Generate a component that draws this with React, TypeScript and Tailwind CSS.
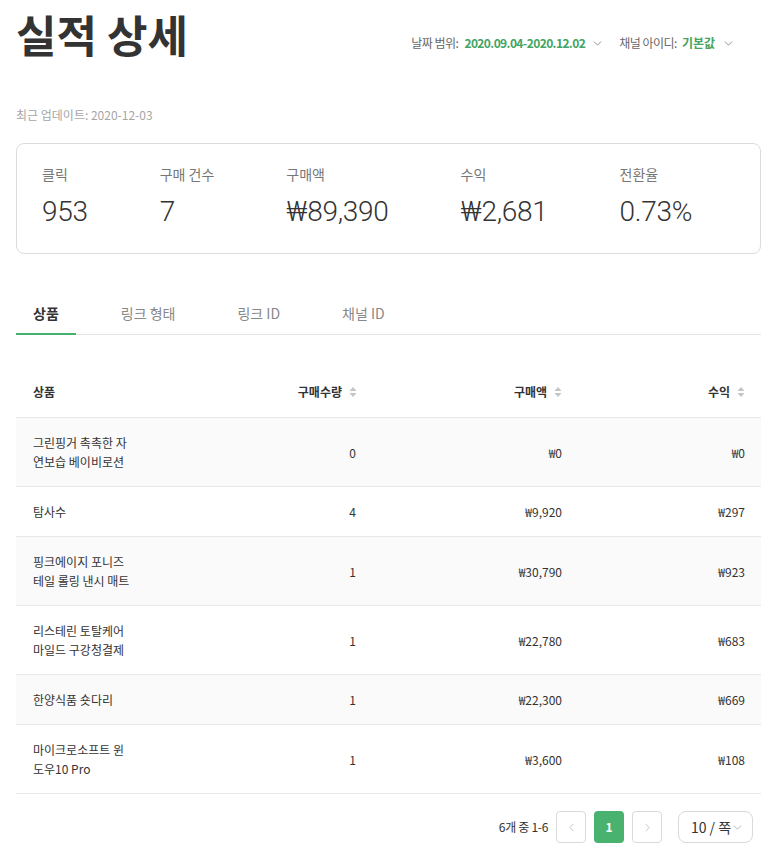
import { ChevronDown, ChevronLeft, ChevronRight } from "lucide-react";

const font = { fontFamily: '"Noto Sans CJK KR", "Noto Sans", sans-serif' };

type Row = {
  name: string[];
  qty: string;
  amount: string;
  revenue: string;
};

const rows: Row[] = [
  { name: ["그린핑거 촉촉한 자", "연보습 베이비로션"], qty: "0", amount: "₩0", revenue: "₩0" },
  { name: ["탐사수"], qty: "4", amount: "₩9,920", revenue: "₩297" },
  { name: ["핑크에이지 포니즈", "테일 롤링 낸시 매트"], qty: "1", amount: "₩30,790", revenue: "₩923" },
  { name: ["리스테린 토탈케어", "마일드 구강청결제"], qty: "1", amount: "₩22,780", revenue: "₩683" },
  { name: ["한양식품 숏다리"], qty: "1", amount: "₩22,300", revenue: "₩669" },
  { name: ["마이크로소프트 윈", "도우10 Pro"], qty: "1", amount: "₩3,600", revenue: "₩108" },
];

const stats = [
  { label: "클릭", value: "953" },
  { label: "구매 건수", value: "7" },
  { label: "구매액", value: "₩89,390" },
  { label: "수익", value: "₩2,681" },
  { label: "전환율", value: "0.73%" },
];

const tabs = ["상품", "링크 형태", "링크 ID", "채널 ID"];

function SortIcon() {
  return (
    <svg width="8" height="12" viewBox="0 0 8 12" className="ml-[7px]">
      <path d="M4 1 L7.5 5 L0.5 5 Z" fill="#c4c4c4" />
      <path d="M4 11 L7.5 7 L0.5 7 Z" fill="#c4c4c4" />
    </svg>
  );
}

function Header() {
  return (
    <div className="flex items-start justify-between">
      <h1 className="mt-[4px] text-[44px] font-bold leading-[60px] text-[#333]">실적 상세</h1>
      <div className="mt-[33px] mr-[26px] flex items-center text-[12px] leading-[20px]">
        <span className="tracking-[-0.5px] text-[#666]">날짜 범위:</span>
        <span className="ml-[6px] font-bold tracking-[-0.6px] text-[#43a463]">2020.09.04-2020.12.02</span>
        <ChevronDown size={13} strokeWidth={1.5} className="ml-[6px] text-[#777]" />
        <span className="ml-[15px] tracking-[-0.5px] text-[#666]">채널 아이디:</span>
        <span className="ml-[5px] font-bold text-[#43a463]">기본값</span>
        <ChevronDown size={13} strokeWidth={1.5} className="ml-[7px] text-[#777]" />
      </div>
    </div>
  );
}

function StatsCard() {
  return (
    <div className="mt-[18px] flex gap-[72px] rounded-lg border border-[#dcdcdc] px-[25px] pt-[20px] pb-[24px]">
      {stats.map((s) => (
        <div key={s.label} className="flex flex-col">
          <span className="text-[14px] leading-[20px] text-[#777]">{s.label}</span>
          <span
            className="mt-[11px] text-[28px] font-light leading-[34px] tracking-[-0.3px] text-[#333]"
            style={{ fontFamily: 'Roboto, "Noto Sans CJK KR", sans-serif' }}
          >
            {s.value}
          </span>
        </div>
      ))}
    </div>
  );
}

function Tabs() {
  return (
    <div className="mt-[39px] flex gap-[28px] border-b border-[#e5e5e5]">
      {tabs.map((t, i) => (
        <div
          key={t}
          className={
            i === 0
              ? "-mb-px border-b-2 border-[#46b06f] px-[17px] pt-[10px] pb-[10px] text-[14px] font-bold leading-[20px] text-[#333]"
              : "px-[17px] pt-[10px] pb-[11px] text-[14px] leading-[20px] text-[#888]"
          }
        >
          {t}
        </div>
      ))}
    </div>
  );
}

function Table() {
  const grid = "grid grid-cols-[200px_157px_205px_183px]";
  return (
    <div className="mt-[31px]">
      <div className={`${grid} h-[52px] items-center border-b border-[#e8e8e8] text-[12px] font-bold text-[#333]`}>
        <div className="pl-[17px]">상품</div>
        <div className="flex items-center justify-end pr-[16px]">
          구매수량
          <SortIcon />
        </div>
        <div className="flex items-center justify-end pr-[16px]">
          구매액
          <SortIcon />
        </div>
        <div className="flex items-center justify-end pr-[16px]">
          수익
          <SortIcon />
        </div>
      </div>
      {rows.map((r, i) => (
        <div
          key={i}
          className={`${grid} items-center border-b border-[#e8e8e8] py-[15px] text-[12px] leading-[19px] text-[#333] ${
            i % 2 === 0 ? "bg-[#fafafa]" : "bg-white"
          }`}
        >
          <div className="pl-[17px]">
            {r.name.map((n) => (
              <div key={n}>{n}</div>
            ))}
          </div>
          <div className="pr-[17px] text-right">{r.qty}</div>
          <div className="pr-[16px] text-right">{r.amount}</div>
          <div className="pr-[16px] text-right">{r.revenue}</div>
        </div>
      ))}
    </div>
  );
}

function Pagination() {
  return (
    <div className="mt-[17px] mr-[8px] flex items-center justify-end text-[12px] text-[#333]">
      <span className="mr-[8px] tracking-[-0.3px]">6개 중 1-6</span>
      <button className="flex h-[32px] w-[30px] items-center justify-center rounded border border-[#d9d9d9] text-[#bbb]">
        <ChevronLeft size={13} strokeWidth={1.5} />
      </button>
      <button className="ml-[8px] flex h-[32px] w-[30px] items-center justify-center rounded bg-[#48b26e] font-bold text-white">
        1
      </button>
      <button className="ml-[8px] flex h-[32px] w-[30px] items-center justify-center rounded border border-[#d9d9d9] text-[#bbb]">
        <ChevronRight size={13} strokeWidth={1.5} />
      </button>
      <div className="ml-[16px] flex h-[32px] w-[75px] items-center justify-center rounded-lg border border-[#d9d9d9] pl-[4px] text-[14px] text-[#333]">
        10 / 쪽
        <ChevronDown size={13} strokeWidth={1.5} className="text-[#aaa]" />
      </div>
    </div>
  );
}

export default function App() {
  return (
    <div className="min-h-screen bg-white px-4 pb-6" style={font}>
      <Header />
      <p className="mt-[41px] text-[12px] leading-[20px] text-[#a6a6a6]">최근 업데이트: 2020-12-03</p>
      <StatsCard />
      <Tabs />
      <Table />
      <Pagination />
    </div>
  );
}
